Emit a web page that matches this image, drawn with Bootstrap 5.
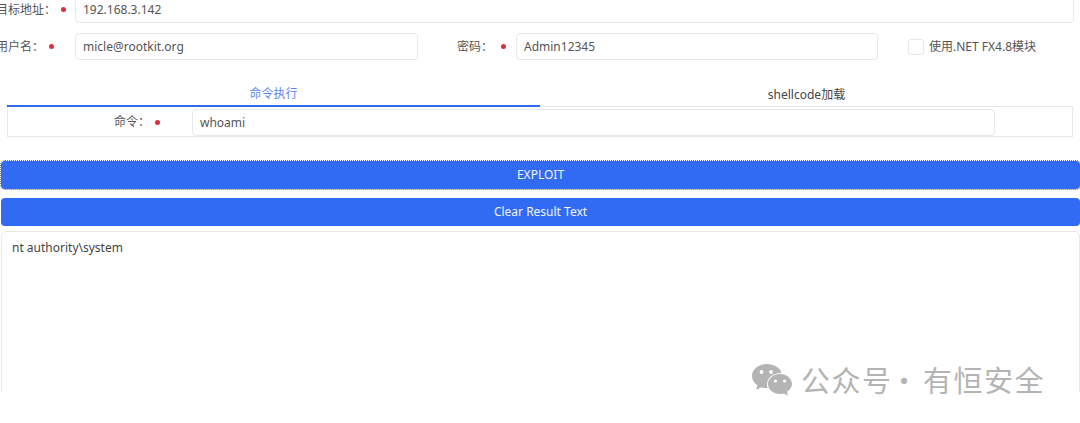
<!DOCTYPE html>
<html lang="zh">
<head>
<meta charset="utf-8">
<title>Exploit</title>
<link rel="stylesheet" href="https://cdn.jsdelivr.net/npm/bootstrap@5.3.0/dist/css/bootstrap.min.css">
<style>
html,body{height:423px;overflow:hidden;background:#fff}
body{font-family:"Noto Sans","Noto Sans CJK SC",sans-serif;font-size:12px;color:#4a4a4a}
.shot{height:392px;overflow:hidden;position:relative}
.fields{margin-top:-4px}
.frow{height:27px;margin-bottom:10px;display:flex;align-items:center}
.lab{flex:none;display:flex;justify-content:flex-end;align-items:center;white-space:nowrap;color:#555;margin:0}
.lab::after{content:"";flex:none;width:5px;height:5px;border-radius:50%;background:#dc2f3e;margin-left:var(--gap,10px);margin-right:var(--mr,9px)}
.lab-a{width:75px;--gap:5px;--mr:9px}
.lab-b{width:75px;--gap:5px;--mr:21px}
.lab-c{width:98px;--gap:8px;--mr:10px}
.lab-d{width:184px;--gap:5px;--mr:32px}
.inp.form-control{height:27px;min-height:0;padding:0 7px;font-size:12px;color:#555;border:1px solid #e9e9e9;border-radius:4px;box-shadow:none;font-family:inherit}
.w-a{width:999px}.w-b{width:343px}.w-c{width:362px}.w-d{width:803px}
.chk{margin-left:30px;display:flex;align-items:center;gap:5px;color:#555}
.chk .form-check-input{width:16px;height:16px;margin:0;border:1px solid #e6e6e6;border-radius:3px}
.tabbar{margin:23px 7px 0;width:1066px;display:flex}
.tabit{width:50%;height:24px;text-align:center;line-height:18px;color:#444;border:0;background:none;padding:0;border-bottom:1px solid #e6e6e6}
.tabit.on{color:#5b86f5;border-bottom:2px solid #3069f0}
.tabpane{margin:0 7px;width:1066px;height:30px;border:1px solid #e9e9e9;border-top:0;display:flex;align-items:center;padding-top:1px}
.act.btn{display:block;margin:0 0 0 1px;width:1079px;height:28px;padding:0;font-size:12px;line-height:1;color:#f2f5ff;background:#316bf3;border:0;border-radius:4px}
.act1{margin-top:24px!important;outline:1px dotted #777;outline-offset:0}
.act2{margin-top:9px!important}
.res{margin:5px 0 0 1px;width:1079px;height:170px;border:1px solid #e9e9e9;border-radius:5px;padding:7px 10px;font-size:12px;color:#444}
.mark-w{position:absolute;left:751px;top:362px;display:flex;align-items:center;gap:9px;color:#b4b4b4;font-family:"Noto Sans CJK SC",sans-serif;font-size:29px;line-height:34px;letter-spacing:1.5px;white-space:nowrap}
.mark-w i{font-style:normal;margin:0 3px 0 -3px}
</style>
</head>
<body>
<div class="shot">
  <div class="fields">
    <div class="frow">
      <label class="lab lab-a" for="t">目标地址：</label>
      <input id="t" class="form-control inp w-a" value="192.168.3.142">
    </div>
    <div class="frow">
      <label class="lab lab-b" for="u">用户名：</label>
      <input id="u" class="form-control inp w-b" value="micle@rootkit.org">
      <label class="lab lab-c" for="p">密码：</label>
      <input id="p" class="form-control inp w-c" value="Admin12345">
      <div class="chk"><input class="form-check-input" type="checkbox" id="n"><label for="n">使用.NET FX4.8模块</label></div>
    </div>
  </div>
  <div class="tabbar">
    <button class="tabit on" type="button">命令执行</button>
    <button class="tabit" type="button">shellcode加载</button>
  </div>
  <div class="tabpane">
    <label class="lab lab-d" for="c">命令：</label>
    <input id="c" class="form-control inp w-d" value="whoami">
  </div>
  <button class="btn btn-primary act act1" type="button">EXPLOIT</button>
  <button class="btn btn-primary act act2" type="button">Clear Result Text</button>
  <div class="res">nt authority\system</div>
</div>
<div class="mark-w">
  <svg width="41" height="33" viewBox="0 0 41 33" aria-hidden="true"><path fill="#b4b4b4" d="M15.500 1C7.500 1 1 6.300 1 13c0 3.800 2.100 7 5.400 9.300L5 27l5.200-2.700c1.700.5 3.400.8 5.300.8h1.100c-.4-1.200-.6-2.400-.6-3.700 0-6.400 6-11.500 13.500-11.500h1C29.100 4.700 22.900 1 15.500 1z"/><circle cx="10.500" cy="9" r="1.900" fill="#fff"/><circle cx="20" cy="9" r="1.900" fill="#fff"/><path fill="#b4b4b4" d="M29 11c-6.600 0-12 4.500-12 10s5.400 10 12 10c1.400 0 2.800-.2 4-.6l4 2.300-1-3.900c2.900-1.900 5-4.700 5-7.800 0-5.500-5.400-10-12-10z"/><circle cx="24.500" cy="18" r="1.600" fill="#fff"/><circle cx="33.500" cy="18" r="1.600" fill="#fff"/></svg>
  <span>公众号<i>·</i>有恒安全</span>
</div>
</body>
</html>
